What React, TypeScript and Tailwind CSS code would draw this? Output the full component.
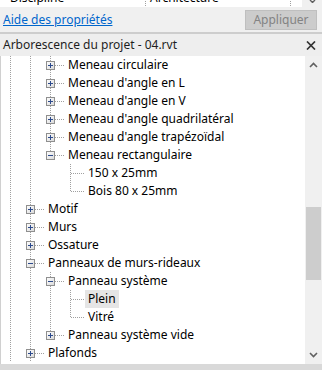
import React from 'react';

type Node = {
  label: string;
  depth: number;
  guides: boolean[];
  last: boolean;
  box?: 'plus' | 'minus';
  selected?: boolean;
};

const ROWS: Node[] = [
  { label: 'Meneau circulaire', depth: 2, guides: [true, true], last: false, box: 'plus' },
  { label: "Meneau d'angle en L", depth: 2, guides: [true, true], last: false, box: 'plus' },
  { label: "Meneau d'angle en V", depth: 2, guides: [true, true], last: false, box: 'plus' },
  { label: "Meneau d'angle quadrilatéral", depth: 2, guides: [true, true], last: false, box: 'plus' },
  { label: "Meneau d'angle trapézoïdal", depth: 2, guides: [true, true], last: false, box: 'plus' },
  { label: 'Meneau rectangulaire', depth: 2, guides: [true, true], last: true, box: 'minus' },
  { label: '150 x 25mm', depth: 3, guides: [true, true, false], last: false },
  { label: 'Bois 80 x 25mm', depth: 3, guides: [true, true, false], last: true },
  { label: 'Motif', depth: 1, guides: [true], last: false, box: 'plus' },
  { label: 'Murs', depth: 1, guides: [true], last: false, box: 'plus' },
  { label: 'Ossature', depth: 1, guides: [true], last: false, box: 'plus' },
  { label: 'Panneaux de murs-rideaux', depth: 1, guides: [true], last: false, box: 'minus' },
  { label: 'Panneau système', depth: 2, guides: [true, true], last: false, box: 'minus' },
  { label: 'Plein', depth: 3, guides: [true, true, true], last: false, selected: true },
  { label: 'Vitré', depth: 3, guides: [true, true, true], last: true },
  { label: 'Panneau système vide', depth: 2, guides: [true, true], last: true, box: 'plus' },
  { label: 'Plafonds', depth: 1, guides: [true], last: false, box: 'plus' },
];

const DOT = '#a0a0a0';

function Connector({ node }: { node: Node }) {
  const w = node.depth * 20 + 24;
  const cx = node.depth * 20 + 9.5;
  return (
    <svg width={w} height={18} className="shrink-0" shapeRendering="crispEdges">
      {node.guides.map((g, i) =>
        g ? (
          <line key={i} x1={i * 20 + 9.5} y1={0} x2={i * 20 + 9.5} y2={18} stroke={DOT} strokeDasharray="1 1" />
        ) : null,
      )}
      <line x1={cx} y1={0} x2={cx} y2={node.last ? 9 : 18} stroke={DOT} strokeDasharray="1 1" />
      <line x1={cx} y1={9.5} x2={w - 1} y2={9.5} stroke={DOT} strokeDasharray="1 1" />
      {node.box && (
        <g>
          <defs>
            <linearGradient id="bx" x1="0" y1="0" x2="1" y2="1">
              <stop offset="0" stopColor="#ffffff" />
              <stop offset="1" stopColor="#d8d8d8" />
            </linearGradient>
          </defs>
          <rect x={cx - 4} y={5.5} width={8} height={8} fill="url(#bx)" stroke="#8f8f8f" />
          <line x1={cx - 2.5} y1={9.5} x2={cx + 2.5} y2={9.5} stroke="#2c4a8c" />
          {node.box === 'plus' && <line x1={cx} y1={7} x2={cx} y2={12} stroke="#2c4a8c" />}
        </g>
      )}
    </svg>
  );
}

function TreeRow({ node }: { node: Node }) {
  return (
    <div className="flex h-[18px] items-center whitespace-nowrap">
      <Connector node={node} />
      <span
        className={`h-[18px] px-[3px] text-[12px] leading-[18px] text-black ${node.selected ? 'bg-[#e5e5e5]' : ''}`}
      >
        {node.label}
      </span>
    </div>
  );
}

function Chevron({ up }: { up?: boolean }) {
  return (
    <svg width="9" height="6" viewBox="0 0 9 6">
      <path d={up ? 'M1 5 L4.5 1.5 L8 5' : 'M1 1 L4.5 4.5 L8 1'} fill="none" stroke="#606060" strokeWidth="1.6" />
    </svg>
  );
}

export default function App() {
  return (
    <div className="flex h-[370px] w-[322px] flex-col overflow-hidden bg-[#f0f0f0] font-['Noto_Sans',sans-serif]">
      {/* properties table, scrolled */}
      <div className="flex h-[7px] shrink-0">
        <div className="relative flex w-[302px] overflow-hidden bg-white text-[12px] leading-[18px] text-black">
          <span className="mt-[-11px] w-[145px] pl-[10px]">Discipline</span>
          <span className="mt-[-12px] h-[30px] border-l border-dotted border-[#a0a0a0]" />
          <span className="mt-[-11px] w-[144px] pl-[4px]">Architecture</span>
          <span className="mt-[-12px] h-[30px] border-l border-dotted border-[#a0a0a0]" />
        </div>
        <div className="flex flex-1 justify-center">
          <svg width="7" height="3" viewBox="0 0 7 3">
            <path d="M1 0 L3.5 2.5 L6 0" fill="none" stroke="#606060" strokeWidth="1.4" />
          </svg>
        </div>
      </div>

      <div className="flex h-[25px] shrink-0 items-start justify-between pl-[3px] pr-[5px]">
        <a className="mt-[5px] text-[12px] leading-[16px] text-[#0066cc] underline">Aide des propriétés</a>
        <button className="mt-[3px] h-[20px] w-[72px] border border-[#bfbfbf] bg-[#cccccc] text-[12px] leading-[18px] text-[#838383]">
          Appliquer
        </button>
      </div>

      <div className="h-[2px] shrink-0 bg-[#cdcdcd]" />

      <div className="flex h-[22px] shrink-0 items-center justify-between bg-[#eeeeee] pl-[3px] pr-[6px]">
        <span className="text-[12px] leading-[16px] text-[#1e1e1e]">Arborescence du projet - 04.rvt</span>
        <svg width="10" height="9" viewBox="0 0 10 9">
          <path d="M1 0.5 L9 8.5 M9 0.5 L1 8.5" stroke="#333" strokeWidth="1.7" />
        </svg>
      </div>

      <div className="flex h-[308px] shrink-0 border-l border-[#d0d0d0]">
        <div className="flex-1 overflow-hidden bg-white">
          {ROWS.map((r) => (
            <TreeRow key={r.label} node={r} />
          ))}
        </div>
        <div className="flex w-[17px] flex-col items-center bg-[#f0f0f0]">
          <div className="flex h-[18px] items-center">
            <Chevron up />
          </div>
          <div className="mt-[133px] h-[73px] w-[15px] bg-[#cdcdcd]" />
          <div className="mt-auto flex h-[18px] items-center">
            <Chevron />
          </div>
        </div>
      </div>

      <div className="flex-1 bg-[#d9d9d9]" />
    </div>
  );
}
